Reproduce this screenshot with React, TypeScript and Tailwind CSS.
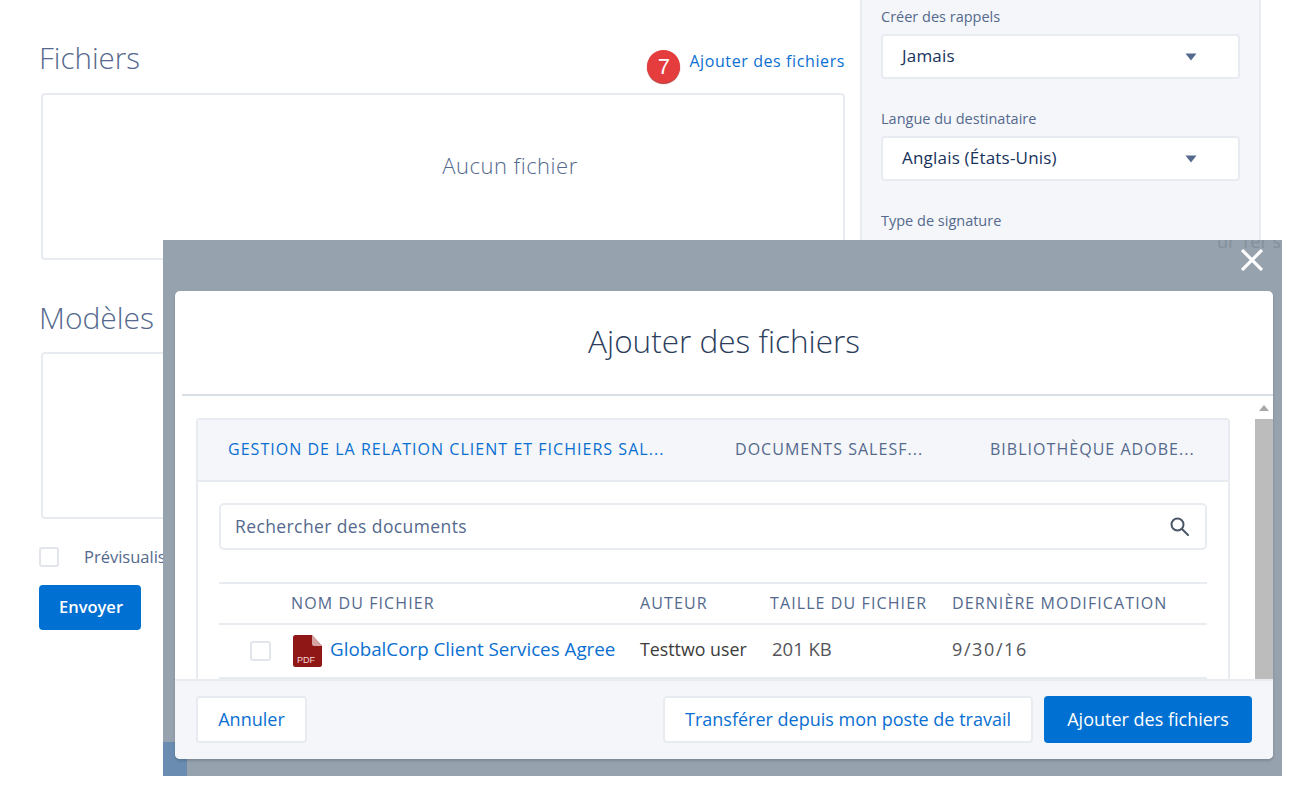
import React from "react";

const font = "font-['Open_Sans','Noto_Sans',sans-serif]";

function Field({ label, value }: { label: string; value: string }) {
  return (
    <div className="flex flex-col">
      <div className="text-[14.5px] leading-[20px] text-[#54698d]">{label}</div>
      <div className="mt-[7px] flex h-[45px] w-[359px] items-center justify-between rounded-[4px] border-2 border-[#e8ebf0] bg-white pl-[19px] pr-[41px] text-[17px] tracking-[0.2px] text-[#16325c]">
        <span className="mb-[2px]">{value}</span>
        <svg width="12" height="8" viewBox="0 0 12 8"><path d="M0.5 0.5h11L6 7.5z" fill="#54698d" /></svg>
      </div>
    </div>
  );
}

function PdfIcon() {
  return (
    <svg width="29" height="32" viewBox="0 0 29 32" className="shrink-0">
      <path d="M2.5 0H19l10 11v18.5a2.5 2.5 0 0 1-2.5 2.5h-24A2.5 2.5 0 0 1 0 29.5v-27A2.5 2.5 0 0 1 2.5 0z" fill="#8f1716" />
      <path d="M19 0l10 11h-8a2 2 0 0 1-2-2z" fill="#d4a5a3" />
      <text x="4" y="27.5" fontSize="9" fill="#f3d9d8" fontFamily="'Liberation Sans',sans-serif">PDF</text>
    </svg>
  );
}

export default function App() {
  return (
    <div className={`relative h-[787px] w-[1293px] overflow-hidden bg-white ${font}`}>
      {/* Page underneath */}
      <div className="flex items-start">
        <div className="flex w-[860px] flex-col pl-[39px] pr-[15px]">
          <div className="mt-[38px] flex h-[40px] items-start justify-between">
            <h2 className="text-[29.5px] font-light leading-[40px] text-[#54698d]">Fichiers</h2>
            <div className="flex items-start">
              <span className="mt-[12px] flex h-[33px] w-[33px] items-center justify-center rounded-full bg-[#e53d3d] font-['Liberation_Sans',sans-serif] text-[22px] text-white shadow-[0_1px_1px_#a33]">7</span>
              <a className="ml-[9px] mt-[12px] text-[16px] leading-[22px] tracking-[0.6px] text-[#0a6fd1]">Ajouter des fichiers</a>
            </div>
          </div>
          <div className="ml-[2px] mt-[15px] flex h-[167px] items-center justify-center rounded-[4px] border-2 border-[#e8ebf0] pb-[22px] pl-[134px] text-[22px] font-light tracking-[0.5px] text-[#54698d]">
            Aucun fichier
          </div>
          <h2 className="mt-[38px] text-[30px] font-light leading-[40px] text-[#54698d]">Modèles</h2>
          <div className="ml-[2px] mt-[14px] h-[167px] rounded-[4px] border-2 border-[#e8ebf0]" />
          <div className="mt-[28px] flex h-[20px] items-center whitespace-nowrap">
            <span className="h-[20px] w-[20px] rounded-[3px] border-2 border-[#e2e5ec] bg-white" />
            <span className="ml-[25px] text-[16.5px] text-[#54698d]">Prévisualiser</span>
          </div>
          <button className="mt-[18px] h-[45px] w-[102px] rounded-[4px] bg-[#0070d2] pl-[2px] text-[16.5px] font-semibold text-white">Envoyer</button>
        </div>
        <div className="flex h-[240px] w-[401px] flex-col gap-[30px] overflow-hidden border-x-2 border-[#e8ebf0] bg-[#f4f6f9] pl-[19px] pt-[7px]">
          <Field label="Créer des rappels" value="Jamais" />
          <Field label="Langue du destinataire" value="Anglais (États-Unis)" />
          <div className="text-[14.5px] leading-[20px] text-[#54698d]">Type de signature</div>
        </div>
      </div>

      {/* Backdrop */}
      <div className="absolute left-[163px] top-[240px] h-[536px] w-[1119px] overflow-hidden bg-[#96a2ae]">
        <div className="absolute left-0 top-[502px] h-[34px] w-[24px] bg-[#6a8cb0]" />
        <span className="absolute left-[1054px] top-[-11px] whitespace-nowrap text-[18px] leading-[24px] text-[#84909c]">ur 1er s</span>
        <svg className="absolute left-[1078px] top-[9px]" width="22" height="22" viewBox="0 0 22 22" stroke="#fff" strokeWidth="3.2">
          <path d="M1 1l20 20M21 1L1 21" />
        </svg>

        {/* Modal */}
        <div className="absolute left-[12px] top-[51px] flex h-[468px] w-[1098px] flex-col overflow-hidden rounded-[5px] bg-white shadow-[0_2px_3px_rgba(0,0,0,0.16)]">
          <div className="ml-[7px] flex h-[105px] shrink-0 items-center justify-center border-b-2 border-[#d8dde6] pb-[3px] pr-[7px] text-[31.5px] font-light text-[#2c3e5c]">
            Ajouter des fichiers
          </div>

          <div className="flex min-h-0 flex-1">
            <div className="min-w-0 flex-1 overflow-hidden pl-[21px] pr-[25px] pt-[22px]">
              <div className="rounded-t-[4px] border-2 border-b-0 border-[#e8ebf0]">
                <div className="flex h-[62px] items-center whitespace-nowrap border-b-2 border-[#e8ebf0] bg-[#f4f6f9] pb-[2px] text-[16px] tracking-[1.03px]">
                  <span className="ml-[30px] w-[507px] text-[#0a6fd1]">GESTION DE LA RELATION CLIENT ET FICHIERS SAL...</span>
                  <span className="w-[255px] text-[#54698d]">DOCUMENTS SALESF...</span>
                  <span className="text-[#54698d]">BIBLIOTHÈQUE ADOBE...</span>
                </div>
                <div className="px-[21px] pt-[21px]">
                  <div className="flex h-[47px] items-center justify-between rounded-[5px] border-2 border-[#e8ebf0] pl-[14px] pr-[16px] text-[17.5px] tracking-[0.4px] text-[#54698d]">
                    <span>Rechercher des documents</span>
                    <svg width="19" height="19" viewBox="0 0 19 19" fill="none" stroke="#4a5568" strokeWidth="2">
                      <circle cx="7.5" cy="7.5" r="6" />
                      <path d="M12 12l6 6" strokeLinecap="round" />
                    </svg>
                  </div>
                  <div className="mt-[32px] flex h-[43px] items-center whitespace-nowrap border-y-2 border-[#e8ebf0] pb-[2px] text-[16px] tracking-[1.1px] text-[#54698d]">
                    <span className="ml-[72px] w-[349px]">NOM DU FICHIER</span>
                    <span className="w-[130px]">AUTEUR</span>
                    <span className="w-[182px]">TAILLE DU FICHIER</span>
                    <span>DERNIÈRE MODIFICATION</span>
                  </div>
                  <div className="flex h-[54px] items-center whitespace-nowrap border-b-2 border-[#e8ebf0] pb-[1px] text-[17.8px]">
                    <span className="ml-[31px] h-[20px] w-[21px] shrink-0 rounded-[3px] border-2 border-[#e2e5ec] bg-white" />
                    <span className="ml-[22px] flex w-[347px] items-center">
                      <PdfIcon />
                      <a className="mb-[2px] ml-[8px] text-[18.8px] text-[#0a6fd1]">GlobalCorp Client Services Agree</a>
                    </span>
                    <span className="mb-[2px] w-[132px] text-[#3c3c3c]">Testtwo user</span>
                    <span className="mb-[3px] w-[180px] text-[18.5px] text-[#54555a]">201 KB</span>
                    <span className="mb-[2px] text-[18px] tracking-[1.6px] text-[#54555a]">9/30/16</span>
                  </div>
                </div>
              </div>
            </div>
            <div className="flex w-[18px] shrink-0 flex-col">
              <div className="flex h-[23px] items-center justify-center">
                <svg width="10" height="6" viewBox="0 0 10 6"><path d="M5 0l5 6H0z" fill="#a8a8a8" /></svg>
              </div>
              <div className="flex-1 bg-[#bcbcbc]" />
            </div>
          </div>

          <div className="flex h-[80px] shrink-0 items-center justify-between border-t-2 border-[#e8ebf0] bg-[#f4f6f9] pb-[2px] pl-[21px] pr-[21px]">
            <button className="h-[47px] w-[111px] rounded-[4px] border-2 border-[#e8ebf0] bg-white text-[18px] text-[#0a6fd1]">Annuler</button>
            <div className="flex gap-[11px]">
              <button className="h-[47px] w-[370px] rounded-[4px] border-2 border-[#e8ebf0] bg-white text-[18px] text-[#0a6fd1]">Transférer depuis mon poste de travail</button>
              <button className="h-[47px] w-[208px] rounded-[4px] bg-[#0070d2] text-[18px] font-medium text-white">Ajouter des fichiers</button>
            </div>
          </div>
        </div>
      </div>
    </div>
  );
}
